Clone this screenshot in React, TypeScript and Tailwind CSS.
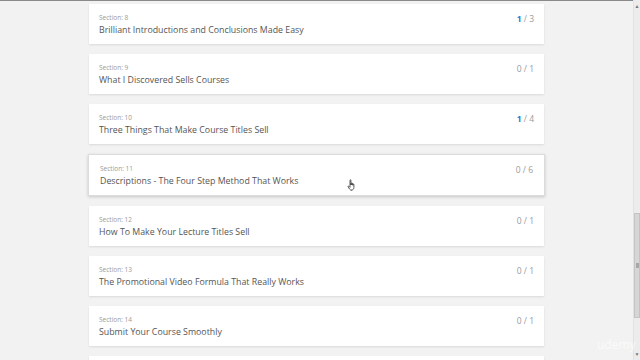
const sections = [
  { n: 8, title: 'Brilliant Introductions and Conclusions Made Easy', done: 1, total: 3 },
  { n: 9, title: 'What I Discovered Sells Courses', done: 0, total: 1 },
  { n: 10, title: 'Three Things That Make Course Titles Sell', done: 1, total: 4 },
  { n: 11, title: 'Descriptions - The Four Step Method That Works', done: 0, total: 6, hover: true },
  { n: 12, title: 'How To Make Your Lecture Titles Sell', done: 0, total: 1 },
  { n: 13, title: 'The Promotional Video Formula That Really Works', done: 0, total: 1 },
  { n: 14, title: 'Submit Your Course Smoothly', done: 0, total: 1 },
];

function HandCursor() {
  return (
    <svg width="10" height="12" viewBox="0 0 10 12" className="absolute left-[347px] top-[179px]">
      <path
        d="M3 1.2c0-.6.9-.6.9 0V6l.1-1.6c0-.6.9-.6.9 0V6l.1-1.2c0-.6.9-.6.9 0V6.3l.1-.8c0-.6.9-.6.9 0V8.5c0 1.6-1.1 2.7-2.6 2.7H4.6c-.9 0-1.5-.4-2-1.1L1.1 7.8c-.3-.5.3-1 .8-.6L3 8.3z"
        fill="#fff"
        stroke="#333"
        strokeWidth="0.8"
      />
    </svg>
  );
}

export default function App() {
  return (
    <div
      className="relative w-[640px] h-[360px] overflow-hidden flex bg-[#f2f2f2]"
      style={{ fontFamily: '"Open Sans", "Noto Sans", sans-serif' }}
    >
      <div className="absolute top-0 left-0 w-full h-px bg-[#8a8a8a]" />

      {/* Section list */}
      <div className="w-[633px] flex flex-col items-center pt-1 gap-[10px]">
        {sections.map((s) => (
          <div
            key={s.n}
            className={
              s.hover
                ? 'w-[457px] h-[42px] shrink-0 bg-white flex justify-between pl-[11px] pr-[11px] pt-[10px] border border-[#dcdcdc] shadow-[0_1px_3px_rgba(0,0,0,0.18)]'
                : 'w-[455px] h-[40px] shrink-0 bg-white flex justify-between pl-[10px] pr-[10px] pt-[10px] shadow-[0_1px_2px_rgba(0,0,0,0.1)]'
            }
          >
            <div className="flex flex-col">
              <span className="text-[6.5px] leading-[8px] text-[#9a9a9a]">Section: {s.n}</span>
              <span className="text-[8.8px] leading-[14px] mt-[1px] text-[#555555]">{s.title}</span>
            </div>
            <span className="text-[8.5px] leading-[12px] text-[#9a9a9a] -mt-[1px]">
              <span className={s.done ? 'text-[#2a7bd0] font-bold' : ''}>{s.done}</span> / {s.total}
            </span>
          </div>
        ))}
        <div className="w-[455px] h-[40px] shrink-0 bg-white shadow-[0_1px_2px_rgba(0,0,0,0.1)]" />
      </div>

      {/* Scrollbar */}
      <div className="w-[7px] h-full bg-[#ececec] border-l border-[#e2e2e2] flex flex-col items-center relative">
        <div className="mt-[3px] text-[5px] leading-[6px] text-[#777]">▲</div>
        <div className="mt-[204px] w-[6px] h-[105px] bg-[#d6d6d6] border border-[#c4c4c4] flex items-center justify-center">
          <div className="w-[3px] h-[5px] bg-[#a8a8a8]" />
        </div>
        <div className="mt-auto mb-[3px] text-[5px] leading-[6px] text-[#777]">▼</div>
      </div>

      <span className="absolute left-[597px] top-[338px] text-[12px] leading-[14px] text-white/70">udemy</span>
      <HandCursor />
    </div>
  );
}
